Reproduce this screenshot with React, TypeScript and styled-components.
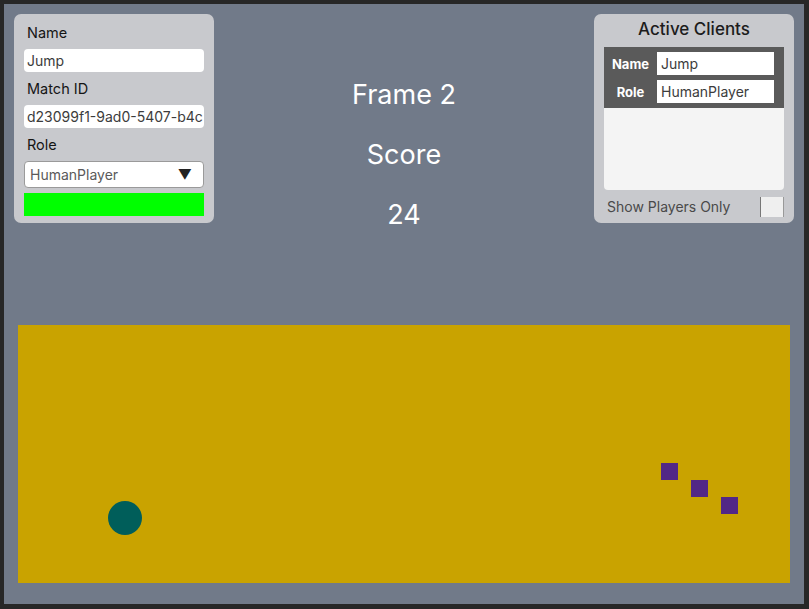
import React from 'react';
import styled, { createGlobalStyle } from 'styled-components';

const GlobalStyle = createGlobalStyle`
    html, body {
        margin: 0;
        padding: 0;
        background: #272727;
    }
    body {
        font-family: Inter, "Noto Sans", sans-serif;
    }
`;

const Frame = styled.div`
    width: 809px;
    height: 609px;
    padding: 4px 5px 5px 4px;
    box-sizing: border-box;
    background: #272727;
`;

const Screen = styled.div`
    width: 800px;
    height: 600px;
    background: #717a89;
    display: flex;
    flex-direction: column;
`;

const TopBar = styled.div`
    display: flex;
    justify-content: space-between;
    align-items: flex-start;
    padding: 10px 10px 0 10px;
    height: 311px;
    box-sizing: border-box;
`;

const Panel = styled.div<{ $top: number }>`
    width: 200px;
    height: 209px;
    box-sizing: border-box;
    background: #c8c9cd;
    border-radius: 7px;
    padding: ${({ $top }) => $top}px 10px 0 10px;
    display: flex;
    flex-direction: column;
`;

const FieldLabel = styled.div`
    height: 33px;
    display: flex;
    align-items: center;
    padding-left: 3px;
    font-size: 14.5px;
    font-weight: 400;
    color: #151515;
`;

const TextField = styled.div`
    height: 23px;
    background: #ffffff;
    border-radius: 4px;
    display: flex;
    align-items: center;
    padding-left: 3px;
    font-size: 14px;
    color: #3c3c3c;
    white-space: nowrap;
    overflow: hidden;
`;

const Dropdown = styled.div`
    height: 27px;
    box-sizing: border-box;
    background: #ffffff;
    border: 1px solid #9a9a9a;
    border-radius: 4px;
    display: flex;
    align-items: center;
    justify-content: space-between;
    padding: 0 11px 0 5px;
    font-size: 14px;
    color: #5a5a5a;
`;

const Arrow = styled.span`
    font-size: 14px;
    color: #222;
`;

const StatusBar = styled.div<{ color: string }>`
    height: 23px;
    margin-top: 5px;
    background: ${({ color }) => color};
`;

const Center = styled.div`
    display: flex;
    flex-direction: column;
    align-items: center;
    padding-top: 61px;
    color: #ffffff;
    font-size: 27px;
`;

const BigLine = styled.div`
    height: 60px;
    line-height: 40px;
`;

const Title = styled.div`
    height: 30px;
    line-height: 30px;
    margin-bottom: 3px;
    text-align: center;
    font-size: 17px;
    font-weight: 500;
    color: #1c1c1c;
`;

const ClientList = styled.div`
    height: 143px;
    background: #f4f4f4;
    border-radius: 0 0 4px 4px;
    overflow: hidden;
`;

const ClientCard = styled.div`
    background: #5a5a5a;
    padding: 5px 10px 5px 0;
    display: flex;
    flex-direction: column;
    gap: 5px;
`;

const ClientRow = styled.div`
    display: flex;
    align-items: center;
`;

const ClientLabel = styled.div`
    width: 53px;
    text-align: center;
    font-size: 13px;
    font-weight: 700;
    color: #ffffff;
`;

const ClientValue = styled.div`
    flex: 1;
    height: 23px;
    background: #ffffff;
    display: flex;
    align-items: center;
    padding-left: 4px;
    font-size: 14px;
    color: #3c3c3c;
`;

const ToggleRow = styled.div`
    display: flex;
    align-items: center;
    justify-content: space-between;
    height: 33px;
    padding-left: 3px;
    margin-right: -10px;
    padding-right: 10px;
`;

const ToggleText = styled.div`
    font-size: 14px;
    color: #4a4a4a;
`;

const CheckBox = styled.div`
    width: 24px;
    height: 20px;
    box-sizing: border-box;
    background: #efefef;
    border-left: 1px solid #777;
    border-right: 1px solid #999;
`;

const GameArea = styled.div`
    position: relative;
    margin: 10px 14px 0 14px;
    height: 258px;
    background: #c9a300;
`;

const Ball = styled.div`
    position: absolute;
    width: 34px;
    height: 34px;
    border-radius: 50%;
    background: #005e5a;
`;

const Block = styled.div`
    position: absolute;
    width: 17px;
    height: 17px;
    background: #522786;
`;

const blocks = [
    { x: 643, y: 138 },
    { x: 673, y: 155 },
    { x: 703, y: 172 },
];

export default function App() {
    return (
        <>
            <GlobalStyle />
            <Frame>
                <Screen>
                    <TopBar>
                        <Panel $top={2}>
                            <FieldLabel>Name</FieldLabel>
                            <TextField>Jump</TextField>
                            <FieldLabel>Match ID</FieldLabel>
                            <TextField>d23099f1-9ad0-5407-b4c</TextField>
                            <FieldLabel>Role</FieldLabel>
                            <Dropdown>
                                <span>HumanPlayer</span>
                                <Arrow>▼</Arrow>
                            </Dropdown>
                            <StatusBar color="#00ff00" />
                        </Panel>
                        <Center>
                            <BigLine>Frame 2</BigLine>
                            <BigLine>Score</BigLine>
                            <BigLine>24</BigLine>
                        </Center>
                        <Panel $top={0}>
                            <Title>Active Clients</Title>
                            <ClientList>
                                <ClientCard>
                                    <ClientRow>
                                        <ClientLabel>Name</ClientLabel>
                                        <ClientValue>Jump</ClientValue>
                                    </ClientRow>
                                    <ClientRow>
                                        <ClientLabel>Role</ClientLabel>
                                        <ClientValue>HumanPlayer</ClientValue>
                                    </ClientRow>
                                </ClientCard>
                            </ClientList>
                            <ToggleRow>
                                <ToggleText>Show Players Only</ToggleText>
                                <CheckBox />
                            </ToggleRow>
                        </Panel>
                    </TopBar>
                    <GameArea>
                        <Ball style={{ left: 90, top: 176 }} />
                        {blocks.map((b, i) => (
                            <Block key={i} style={{ left: b.x, top: b.y }} />
                        ))}
                    </GameArea>
                </Screen>
            </Frame>
        </>
    );
}
